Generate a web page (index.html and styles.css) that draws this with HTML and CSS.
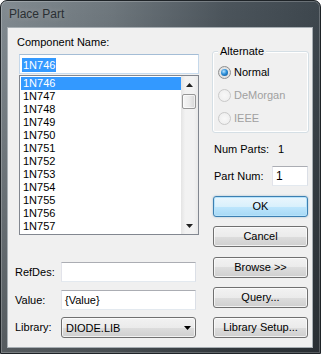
FILE: index.html
```html
<!DOCTYPE html>
<html>
<head>
    <title>Place Part</title>
    <link rel="stylesheet" href="styles.css">
</head>
<body>

    <div class="window">
        <div class="titlebar">Place Part</div>

        <div class="client">
            <div class="left-col">
                <div class="comp-label">Component Name:</div>
                <div class="textbox name-box"><span class="selected-text">1N746</span></div>

                <div class="listbox">
                    <div class="items">
                        <div class="item active">1N746</div>
                        <div class="item">1N747</div>
                        <div class="item">1N748</div>
                        <div class="item">1N749</div>
                        <div class="item">1N750</div>
                        <div class="item">1N751</div>
                        <div class="item">1N752</div>
                        <div class="item">1N753</div>
                        <div class="item">1N754</div>
                        <div class="item">1N755</div>
                        <div class="item">1N756</div>
                        <div class="item">1N757</div>
                    </div>
                    <div class="vscroll">
                        <div class="arrow-btn">
                            <svg width="7" height="4" viewBox="0 0 7 4"><path d="M3.5 0 L7 4 L0 4 Z" fill="#222"/></svg>
                        </div>
                        <div class="thumb"></div>
                        <div class="track"></div>
                        <div class="arrow-btn">
                            <svg width="7" height="4" viewBox="0 0 7 4"><path d="M0 0 L7 0 L3.5 4 Z" fill="#222"/></svg>
                        </div>
                    </div>
                </div>

                <div class="fields">
                    <div class="field-row">
                        <span class="field-label">RefDes:</span>
                        <div class="textbox field-box"></div>
                    </div>
                    <div class="field-row">
                        <span class="field-label">Value:</span>
                        <div class="textbox field-box">{Value}</div>
                    </div>
                    <div class="field-row lib-row">
                        <span class="field-label">Library:</span>
                        <div class="combo">
                            <span>DIODE.LIB</span>
                            <svg width="7" height="4" viewBox="0 0 7 4"><path d="M0 0 L7 0 L3.5 4 Z" fill="#000"/></svg>
                        </div>
                    </div>
                </div>
            </div>

            <div class="right-col">
                <div class="group">
                    <span class="legend">Alternate</span>
                    <div class="radio-row"><span class="radio checked"></span>Normal</div>
                    <div class="radio-row disabled"><span class="radio"></span>DeMorgan</div>
                    <div class="radio-row disabled"><span class="radio"></span>IEEE</div>
                </div>

                <div class="num-parts"><span class="info-label">Num Parts:</span>1</div>

                <div class="part-num">
                    <span class="part-label">Part Num:</span>
                    <div class="textbox part-box">1</div>
                </div>

                <div class="buttons">
                    <div class="btn default">OK</div>
                    <div class="btn">Cancel</div>
                    <div class="btn">Browse &gt;&gt;</div>
                    <div class="btn">Query...</div>
                    <div class="btn">Library Setup...</div>
                </div>
            </div>
        </div>
    </div>

</body>
</html>
```

FILE: styles.css
```css
body {
    margin: 0;
    background: #fff;
    font-family: "Liberation Sans", Arial, sans-serif;
    font-size: 11px;
    color: #000;
}
.window {
    width: 321px;
    height: 354px;
    box-sizing: border-box;
    border: 1px solid #1e2327;
    border-radius: 7px 7px 0 0;
    background:
        linear-gradient(to bottom, rgba(0,0,0,0) 0%, rgba(0,0,0,0.35) 100%),
        linear-gradient(to right, #828b91 0%, #6e777d 35%, #4c555c 70%, #3e474e 100%);
    box-shadow: inset 0 0 0 1px rgba(255,255,255,0.22);
    display: flex;
    flex-direction: column;
}
.titlebar {
    height: 27px;
    box-sizing: border-box;
    padding: 6px 0 0 8px;
    font-size: 12px;
    line-height: 14px;
    color: #2a2f33;
    text-shadow: 0 0 6px rgba(255,255,255,0.25);
}
.client {
    flex: 1;
    margin: 0 8px 6px 7px;
    background: #f0f0f0;
    box-shadow: 0 0 0 1px #a7aeb3;
    display: flex;
}

/* left column */
.left-col {
    width: 184px;
    margin-left: 7px;
    padding-top: 8px;
}
.comp-label {
    line-height: 13px;
    padding-left: 2px;
}
.textbox {
    box-sizing: border-box;
    background: #fff;
    border: 1px solid;
    border-color: #abadb3 #dbdfe6 #e3e9ef #e2e3ea;
}
.name-box {
    width: 180px;
    height: 20px;
    margin: 5px 0 0 4px;
    padding: 3px 0 0 2px;
    border-color: #a4bdd6 #c5d8ea #c9dcee #c5d8ea;
    line-height: 14px;
}
.selected-text {
    display: inline-block;
    background: #3399ff;
    color: #fff;
    padding: 0 1px;
}
.listbox {
    width: 180px;
    height: 160px;
    box-sizing: border-box;
    margin: 1px 0 0 4px;
    border: 1px solid #828790;
    background: #fff;
    display: flex;
}
.items {
    flex: 1;
    padding: 1px 0 1px 1px;
}
.item {
    height: 13px;
    line-height: 13px;
    padding-left: 2px;
}
.item.active {
    background: #3399ff;
    color: #fff;
}
.vscroll {
    width: 17px;
    display: flex;
    flex-direction: column;
    background: linear-gradient(to right, #e4e4e4 0%, #f2f2f2 25%, #f2f2f2 75%, #e9e9e9 100%);
}
.arrow-btn {
    height: 17px;
    display: flex;
    align-items: center;
    justify-content: center;
}
.thumb {
    width: 14px;
    height: 15px;
    box-sizing: border-box;
    margin: 1px 0 0 1px;
    border: 1px solid #979797;
    border-radius: 2px;
    background: linear-gradient(to right, #f6f6f6 0%, #ececec 50%, #d6d6d6 100%);
    box-shadow: inset 0 0 0 1px rgba(255,255,255,0.6);
}
.track {
    flex: 1;
}
.fields {
    margin-top: 27px;
}
.field-row {
    display: flex;
    align-items: center;
    margin-bottom: 8px;
}
.field-row.lib-row {
    margin-top: -1px;
}
.field-label {
    width: 46px;
    line-height: 13px;
}
.field-box {
    width: 135px;
    height: 20px;
    padding-left: 3px;
    line-height: 18px;
}
.combo {
    width: 135px;
    height: 21px;
    box-sizing: border-box;
    border: 1px solid #707070;
    border-radius: 3px;
    background: linear-gradient(#f2f2f2 0%, #ebebeb 50%, #dddddd 50%, #cfcfcf 100%);
    box-shadow: inset 0 0 0 1px rgba(255,255,255,0.7);
    display: flex;
    align-items: center;
    justify-content: space-between;
    padding: 0 4px 0 4px;
}

/* right column */
.right-col {
    width: 97px;
    margin-left: 13px;
    padding-top: 23px;
}
.group {
    position: relative;
    height: 82px;
    box-sizing: border-box;
    border: 1px solid #d5dfe5;
    border-radius: 3px;
    box-shadow: inset 0 0 0 1px #fff;
    padding: 13px 0 0 5px;
}
.legend {
    position: absolute;
    top: -7px;
    left: 5px;
    padding: 0 2px;
    background: #f0f0f0;
    line-height: 13px;
}
.radio-row {
    display: flex;
    align-items: center;
    height: 14px;
    margin-bottom: 9px;
}
.radio-row.disabled {
    color: #a0a0a0;
}
.radio {
    width: 13px;
    height: 13px;
    box-sizing: border-box;
    margin-right: 3px;
    border: 1px solid #8e8f8f;
    border-radius: 50%;
    background: radial-gradient(circle at 50% 50%, #f4f4f4 0%, #e0e0e0 70%, #d4d4d4 100%);
    display: flex;
    align-items: center;
    justify-content: center;
}
.radio.checked::after {
    content: "";
    width: 7px;
    height: 7px;
    border-radius: 50%;
    background: radial-gradient(circle at 40% 35%, #b9e4ff 0%, #2b8ed8 45%, #0b4a86 100%);
}
.disabled .radio {
    border-color: #c9c9c9;
    background: radial-gradient(circle at 50% 50%, #f8f8f8 0%, #ececec 100%);
}
.num-parts {
    margin-top: 10px;
    padding-left: 2px;
    line-height: 13px;
}
.info-label {
    display: inline-block;
    width: 64px;
}
.part-num {
    display: flex;
    align-items: center;
    margin-top: 10px;
    padding-left: 2px;
}
.part-label {
    width: 58px;
}
.part-box {
    width: 36px;
    height: 20px;
    padding-left: 3px;
    line-height: 18px;
    font-size: 12px;
}
.buttons {
    margin-top: 10px;
    padding-left: 1px;
    display: flex;
    flex-direction: column;
    gap: 9.25px;
}
.btn {
    width: 95px;
    height: 21px;
    box-sizing: border-box;
    border: 1px solid #707070;
    border-radius: 3px;
    background: linear-gradient(#f2f2f2 0%, #ebebeb 50%, #dddddd 50%, #cfcfcf 100%);
    box-shadow: inset 0 0 0 1px rgba(255,255,255,0.7);
    text-align: center;
    line-height: 19px;
}
.btn.default {
    border-color: #3c7fb1;
    background: linear-gradient(#eaf6fd 0%, #d9f0fc 50%, #bee6fd 50%, #a7d9f5 100%);
    box-shadow: inset 0 0 0 1px #b7e3fb, 0 0 2px rgba(60,127,177,0.5);
}
```
